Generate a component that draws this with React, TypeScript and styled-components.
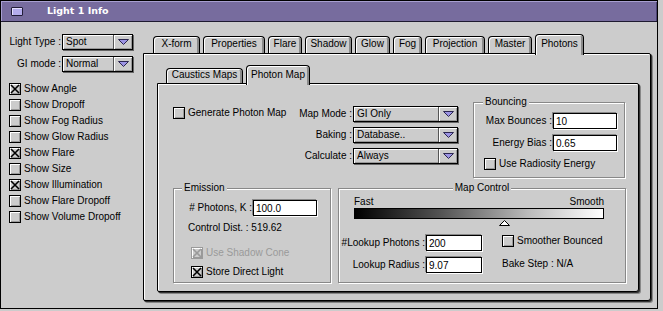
import React from "react";
import styled, { createGlobalStyle } from "styled-components";

const FACE = "#cccccc";
const UI_FONT = `"Liberation Sans", Arial, sans-serif`;

const GlobalStyle = createGlobalStyle`
  * { box-sizing: border-box; }
  html, body { margin: 0; padding: 0; background: ${FACE}; }
  body {
    font-family: ${UI_FONT};
    font-size: 10px;
    line-height: 12px;
    color: #000;
  }
`;

// ---- window chrome ----

const Window = styled.div`
  width: 658px;
  height: 309px;
  border: 1px solid #000;
  background: ${FACE};
  display: flex;
  flex-direction: column;
`;

const TitleBar = styled.div`
  flex: none;
  height: 21px;
  display: flex;
  align-items: center;
  padding-left: 10px;
  background: #776c9e;
  border-bottom: 1px solid #1e1a30;
  box-shadow: inset 1px 1px 0 #a79fd0, inset -1px 0 0 #4b4373;
`;

const CloseBox = styled.span`
  width: 12px;
  height: 9px;
  border: 1px solid #221d38;
  border-radius: 1px;
  background: #b4acec;
  box-shadow: inset 1px 1px 0 #e4e0ff;
`;

const Title = styled.span`
  margin-left: 24px;
  font-family: "DejaVu Sans", sans-serif;
  font-weight: bold;
  font-size: 9.5px;
  color: #fff;
`;

const Body = styled.div`
  flex: 1;
  display: flex;
`;

const Sidebar = styled.div`
  width: 142px;
  flex: none;
  padding: 12px 0 0 8px;
`;

const Main = styled.div`
  padding-top: 12px;
  display: flex;
  flex-direction: column;
`;

// ---- form bits ----

const FormGrid = styled.div<{ $label: number; $field: number; $gap: number }>`
  display: grid;
  grid-template-columns: ${(p) => p.$label}px ${(p) => p.$field}px;
  row-gap: ${(p) => p.$gap}px;
  align-items: center;
`;

const FieldLabel = styled.span`
  text-align: right;
  padding-right: 1px;
  white-space: nowrap;
`;

const Popup = styled.div`
  height: 16px;
  border: 1px solid #000;
  background: ${FACE};
  box-shadow: inset 1px 1px 0 #fff, inset -1px -1px 0 #999, 1px 1px 0 #666;
  display: flex;
  align-items: center;
`;

const PopupValue = styled.span`
  flex: 1;
  padding-left: 3px;
  white-space: nowrap;
  overflow: hidden;
`;

const PopupArrow = styled.span`
  width: 19px;
  height: 100%;
  border-left: 1px solid #555;
  box-shadow: inset 1px 0 0 #fff;
  display: flex;
  align-items: center;
  justify-content: center;
`;

const PopupMenu = ({ value }: { value: string }) => (
  <Popup>
    <PopupValue>{value}</PopupValue>
    <PopupArrow>
      <svg width="11" height="6" viewBox="0 0 11 6">
        <polygon points="0.5,0.5 10.5,0.5 5.5,5.5" fill="#9c94e4" stroke="#2c2650" />
      </svg>
    </PopupArrow>
  </Popup>
);

const TextField = styled.input`
  height: 16px;
  width: 100%;
  margin: 0;
  padding: 0 2px;
  background: #fff;
  border: 1px solid #000;
  box-shadow: -1px -1px 0 #888, 1px 1px 0 #fff;
  font: inherit;
  color: #000;
  outline: none;
`;

const CheckRow = styled.label<{ $disabled?: boolean }>`
  height: 16px;
  display: flex;
  align-items: center;
  gap: 3px;
  white-space: nowrap;
  color: ${(p) => (p.$disabled ? "#9a9a9a" : "#000")};
`;

const Box = styled.span<{ $disabled?: boolean }>`
  width: 12px;
  height: 12px;
  flex: none;
  border: 1px solid ${(p) => (p.$disabled ? "#9a9a9a" : "#000")};
  background: ${FACE};
  box-shadow: inset 1px 1px 0 #fff, inset -1px -1px 0 #999;
  display: flex;
  align-items: center;
  justify-content: center;
`;

const CheckBox = ({ label, checked, disabled }: { label: string; checked?: boolean; disabled?: boolean }) => (
  <CheckRow $disabled={disabled}>
    <Box $disabled={disabled}>
      {checked && (
        <svg width="10" height="10" viewBox="0 0 10 10">
          <path d="M1 1 L9 9 M9 1 L1 9" stroke={disabled ? "#9a9a9a" : "#000"} strokeWidth="1.6" />
        </svg>
      )}
    </Box>
    {label}
  </CheckRow>
);

const CheckList = styled.div`
  margin-top: 9px;
  display: flex;
  flex-direction: column;
`;

// ---- tabs ----

const TabStrip = styled.div<{ $indent: number }>`
  display: flex;
  align-items: flex-end;
  gap: 3px;
  padding-left: ${(p) => p.$indent}px;
`;

const Tab = styled.div<{ $w: number; $h: number; $pb: number; $active?: boolean }>`
  width: ${(p) => p.$w}px;
  height: ${(p) => p.$h}px;
  margin-bottom: ${(p) => (p.$active ? -2 : 0)}px;
  padding-bottom: ${(p) => p.$pb + (p.$active ? 2 : 0)}px;
  position: relative;
  z-index: ${(p) => (p.$active ? 1 : 0)};
  border: 1px solid #000;
  border-bottom: 0;
  border-radius: 4px 4px 0 0;
  background: ${FACE};
  box-shadow: inset 1px 1px 0 #fff, inset -2px 0 0 #8a8a8a;
  display: flex;
  justify-content: center;
  align-items: flex-end;
  white-space: nowrap;
`;

const TabPane = styled.div<{ $w: number; $h: number; $pad: string }>`
  width: ${(p) => p.$w}px;
  height: ${(p) => p.$h}px;
  padding: ${(p) => p.$pad};
  border: 1px solid #000;
  border-radius: 0 2px 3px 2px;
  background: ${FACE};
  box-shadow: inset 1px 1px 0 #fff, 1px 1px 0 #333, 2px 2px 0 #888;
  display: flex;
  flex-direction: column;
`;

// ---- group boxes ----

const Row = styled.div<{ $mt?: number; $gap: number }>`
  display: flex;
  align-items: flex-start;
  gap: ${(p) => p.$gap}px;
  margin-top: ${(p) => p.$mt ?? 0}px;
`;

const Group = styled.fieldset<{ $w: number; $h: number }>`
  width: ${(p) => p.$w}px;
  height: ${(p) => p.$h}px;
  min-width: 0;
  margin: 0;
  padding: 0;
  border: 1px solid #888;
  box-shadow: inset 1px 1px 0 #fff, 1px 1px 0 #fff;
  display: flex;
  flex-direction: column;
  align-items: flex-start;
`;

const Legend = styled.legend<{ $indent?: number; $center?: boolean }>`
  padding: 0 2px;
  line-height: 12px;
  margin-left: ${(p) => (p.$center ? "auto" : `${p.$indent}px`)};
  margin-right: ${(p) => (p.$center ? "auto" : "0")};
  background: ${FACE};
`;

const Block = styled.div<{ $mt?: number; $ml?: number; $gap?: number }>`
  margin-top: ${(p) => p.$mt ?? 0}px;
  margin-left: ${(p) => p.$ml ?? 0}px;
  display: flex;
  flex-direction: column;
  gap: ${(p) => p.$gap ?? 0}px;
`;

const TopLeft = styled.div`
  width: 285px;
  height: 82px;
  flex: none;
  display: flex;
  justify-content: space-between;
  align-items: flex-start;
`;

const Readout = styled.div<{ $mt: number; $ml: number }>`
  margin-top: ${(p) => p.$mt}px;
  margin-left: ${(p) => p.$ml}px;
  white-space: nowrap;
`;

// ---- map control slider ----

const ScaleLabels = styled.div`
  width: 250px;
  margin: 2px 0 0 15px;
  display: flex;
  justify-content: space-between;
`;

const GradientBar = styled.div`
  width: 250px;
  height: 11px;
  margin-left: 15px;
  border: 1px solid #000;
  background: linear-gradient(to right, #000 0%, #555 35%, #bbb 70%, #fff 100%);
`;

const ThumbRow = styled.div`
  width: 250px;
  height: 6px;
  margin: 1px 0 0 15px;
  display: flex;
`;

const MapLower = styled.div`
  margin-top: 9px;
  display: flex;
  align-items: flex-start;
`;

const SHOW_OPTIONS = [
  { label: "Show Angle", checked: true },
  { label: "Show Dropoff" },
  { label: "Show Fog Radius" },
  { label: "Show Glow Radius" },
  { label: "Show Flare", checked: true },
  { label: "Show Size" },
  { label: "Show Illumination", checked: true },
  { label: "Show Flare Dropoff" },
  { label: "Show Volume Dropoff" },
];

const MAIN_TABS = [
  { label: "X-form", w: 47 },
  { label: "Properties", w: 62 },
  { label: "Flare", w: 34 },
  { label: "Shadow", w: 47 },
  { label: "Glow", w: 35 },
  { label: "Fog", w: 29 },
  { label: "Projection", w: 60 },
  { label: "Master", w: 44 },
  { label: "Photons", w: 49, active: true },
];

const SUB_TABS = [
  { label: "Caustics Maps", w: 77 },
  { label: "Photon Map", w: 64, active: true },
];

const QUALITY = 0.6;

export default function App() {
  return (
    <>
      <GlobalStyle />
      <Window>
        <TitleBar>
          <CloseBox />
          <Title>Light 1 Info</Title>
        </TitleBar>
        <Body>
          <Sidebar>
            <FormGrid $label={53} $field={71} $gap={6}>
              <FieldLabel>Light Type :</FieldLabel>
              <PopupMenu value="Spot" />
              <FieldLabel>GI mode :</FieldLabel>
              <PopupMenu value="Normal" />
            </FormGrid>
            <CheckList>
              {SHOW_OPTIONS.map((o) => (
                <CheckBox key={o.label} label={o.label} checked={o.checked} />
              ))}
            </CheckList>
          </Sidebar>

          <Main>
            <TabStrip $indent={10}>
              {MAIN_TABS.map((t) => (
                <Tab key={t.label} $w={t.w} $h={t.active ? 21 : 17} $pb={3} $active={t.active}>
                  {t.label}
                </Tab>
              ))}
            </TabStrip>
            <TabPane $w={508} $h={248} $pad="11px 0 0 13px">
              <TabStrip $indent={9}>
                {SUB_TABS.map((t) => (
                  <Tab key={t.label} $w={t.w} $h={t.active ? 20 : 15} $pb={2} $active={t.active}>
                    {t.label}
                  </Tab>
                ))}
              </TabStrip>
              <TabPane $w={482} $h={209} $pad="12px 0 0 15px">
                <Row $gap={15}>
                  <TopLeft>
                    <Block $mt={9}>
                      <CheckBox label="Generate Photon Map" />
                    </Block>
                    <Block $mt={10}>
                      <FormGrid $label={62} $field={105} $gap={5}>
                        <FieldLabel>Map Mode :</FieldLabel>
                        <PopupMenu value="GI Only" />
                        <FieldLabel>Baking :</FieldLabel>
                        <PopupMenu value="Database.." />
                        <FieldLabel>Calculate :</FieldLabel>
                        <PopupMenu value="Always" />
                      </FormGrid>
                    </Block>
                  </TopLeft>
                  <Group $w={152} $h={82}>
                    <Legend $indent={9}>Bouncing</Legend>
                    <Block $mt={5}>
                      <FormGrid $label={79} $field={64} $gap={6}>
                        <FieldLabel>Max Bounces :</FieldLabel>
                        <TextField readOnly value="10" />
                        <FieldLabel>Energy Bias :</FieldLabel>
                        <TextField readOnly value="0.65" />
                      </FormGrid>
                    </Block>
                    <Block $mt={5} $ml={10}>
                      <CheckBox label="Use Radiosity Energy" />
                    </Block>
                  </Group>
                </Row>

                <Row $gap={7} $mt={4}>
                  <Group $w={158} $h={101}>
                    <Legend $indent={8}>Emission</Legend>
                    <Block $mt={6}>
                      <FormGrid $label={79} $field={64} $gap={0}>
                        <FieldLabel># Photons, K :</FieldLabel>
                        <TextField readOnly value="100.0" />
                      </FormGrid>
                    </Block>
                    <Readout $mt={6} $ml={14}>Control Dist. : 519.62</Readout>
                    <Block $mt={11} $ml={17} $gap={3}>
                      <CheckBox label="Use Shadow Cone" checked disabled />
                      <CheckBox label="Store Direct Light" checked />
                    </Block>
                  </Group>

                  <Group $w={288} $h={101}>
                    <Legend $center>Map Control</Legend>
                    <ScaleLabels>
                      <span>Fast</span>
                      <span>Smooth</span>
                    </ScaleLabels>
                    <GradientBar />
                    <ThumbRow>
                      <svg
                        width="11"
                        height="6"
                        viewBox="0 0 11 6"
                        style={{ marginLeft: QUALITY * 250 - 5.5 }}
                      >
                        <polygon points="5.5,0.5 10.5,5.5 0.5,5.5" fill="#fff" stroke="#000" />
                      </svg>
                    </ThumbRow>
                    <MapLower>
                      <FormGrid $label={87} $field={56} $gap={6}>
                        <FieldLabel>#Lookup Photons :</FieldLabel>
                        <TextField readOnly value="200" />
                        <FieldLabel>Lookup Radius :</FieldLabel>
                        <TextField readOnly value="9.07" />
                      </FormGrid>
                      <Block $mt={-2} $ml={20}>
                        <CheckBox label="Smoother Bounced" />
                        <Readout $mt={9} $ml={0}>Bake Step : N/A</Readout>
                      </Block>
                    </MapLower>
                  </Group>
                </Row>
              </TabPane>
            </TabPane>
          </Main>
        </Body>
      </Window>
    </>
  );
}
